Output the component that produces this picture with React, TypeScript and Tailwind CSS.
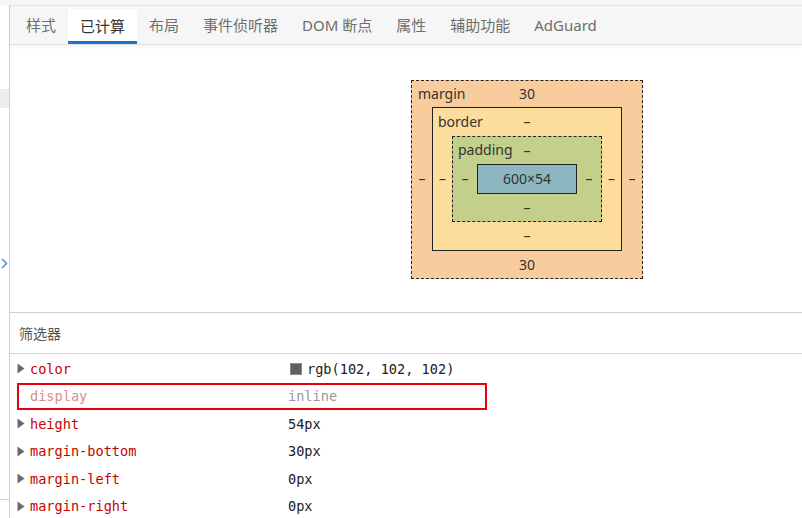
import React from "react";

const tabs = ["样式", "已计算", "布局", "事件侦听器", "DOM 断点", "属性", "辅助功能", "AdGuard"];

type Prop = { name: string; value: string; swatch?: string; inherited?: boolean };

const props: Prop[] = [
  { name: "color", value: "rgb(102, 102, 102)", swatch: "#666666" },
  { name: "display", value: "inline", inherited: true },
  { name: "height", value: "54px" },
  { name: "margin-bottom", value: "30px" },
  { name: "margin-left", value: "0px" },
  { name: "margin-right", value: "0px" },
];

const cjk = "font-['Noto_Sans','Noto_Sans_CJK_SC',sans-serif]";
const mono = "font-['DejaVu_Sans_Mono',monospace]";

function Triangle() {
  return (
    <svg width="8" height="11" viewBox="0 0 8 11" className="shrink-0">
      <path d="M0.5 0.5 L7.5 5.5 L0.5 10.5 Z" fill="#6a6a6a" />
    </svg>
  );
}

function PropRow({ p }: { p: Prop }) {
  if (p.inherited) {
    return (
      <div className="flex h-[27.5px] w-[470px] items-center border-2 border-[#e8000b] pl-[11px]">
        <span className="w-[258px] text-[#dc8c8c]">{p.name}</span>
        <span className="text-[#9a9a9a]">{p.value}</span>
      </div>
    );
  }
  return (
    <div className="flex h-[27.5px] items-center">
      <div className="w-[13px]">
        <Triangle />
      </div>
      <span className="w-[258px] text-[#c80000]">{p.name}</span>
      {p.swatch ? (
        <span className="mr-[5px] ml-[2px] h-[12px] w-[12px] border border-[#8a8a8a] bg-[#5f5f5f]" />
      ) : null}
      <span className="text-[#222]">{p.value}</span>
    </div>
  );
}

function BoxModel() {
  return (
    <div className="flex w-[232px] flex-col self-start border border-dashed border-[#222] bg-[#f9cc9d] text-[14px] leading-none text-[#333]">
      <div className="relative flex h-[26px] items-center justify-center">
        <span className="absolute left-[6px] top-[6px]">margin</span>
        <span>30</span>
      </div>
      <div className="flex items-center">
        <span className="w-[20px] text-center">–</span>
        <div className="flex w-[190px] flex-col border border-[#222] bg-[#fddd9b]">
          <div className="relative flex h-[28px] items-center justify-center">
            <span className="absolute left-[5px] top-[7px]">border</span>
            <span>–</span>
          </div>
          <div className="flex items-center">
            <span className="w-[19px] text-center">–</span>
            <div className="flex w-[150px] flex-col border border-dashed border-[#222] bg-[#c3d08b]">
              <div className="relative flex h-[27px] items-center justify-center">
                <span className="absolute left-[5px] top-[6px]">padding</span>
                <span>–</span>
              </div>
              <div className="flex items-center">
                <span className="w-[24px] text-center">–</span>
                <div className="flex h-[30px] w-[100px] items-center justify-center border border-[#222] bg-[#8cb6c0]">
                  600×54
                </div>
                <span className="w-[24px] text-center">–</span>
              </div>
              <div className="flex h-[27px] items-center justify-center">–</div>
            </div>
            <span className="w-[19px] text-center">–</span>
          </div>
          <div className="flex h-[28px] items-center justify-center">–</div>
        </div>
        <span className="w-[20px] text-center">–</span>
      </div>
      <div className="flex h-[27px] items-center justify-center">30</div>
    </div>
  );
}

export default function App() {
  return (
    <div className="flex h-[518px] w-[802px] flex-col overflow-hidden bg-white">
      <div className="h-[5px] shrink-0 bg-[#f6f6f6]" />
      <div className="flex min-h-0 flex-1">
        <div className="flex w-[10px] shrink-0 flex-col border-r border-[#cfcfcf]">
          <div className="mt-[84px] h-[19px] bg-[#ededed]" />
          <svg width="7" height="11" viewBox="0 0 7 11" className="mt-[150px] ml-[1px]">
            <path d="M1 1 L5.5 5.5 L1 10" fill="none" stroke="#4a8fd8" strokeWidth="1.5" />
          </svg>
          <div className="mt-[230px] h-px bg-[#cfcfcf]" />
        </div>
        <div className="flex min-w-0 flex-1 flex-col">
          <div
            className={`relative z-10 flex h-[40px] shrink-0 items-end border-y border-[#e4e4e4] bg-[#f6f6f6] pl-[4px] text-[15px] shadow-[0_2px_3px_rgba(0,0,0,0.05)] ${cjk}`}
          >
            {tabs.map((t, i) => (
              <div
                key={t}
                className={`flex h-[35px] items-center whitespace-nowrap px-3 ${
                  i === 1
                    ? "border-b-[3px] border-[#1a73cf] bg-white pt-[2px] text-[#333]"
                    : "pb-[2px] text-[#6e6e6e]"
                }`}
              >
                {t}
              </div>
            ))}
          </div>
          <div className="flex h-[268px] shrink-0 items-start border-b border-[#d0d0d0] pl-[401px] pt-[35px] font-['Segoe_UI','Noto_Sans',sans-serif]">
            <BoxModel />
          </div>
          <div
            className={`flex h-[41px] shrink-0 items-center border-b border-[#d6d6d6] pl-[9px] text-[14px] text-[#555] ${cjk}`}
          >
            筛选器
          </div>
          <div className={`flex flex-col pl-[7px] pt-[1px] text-[13.6px] ${mono}`}>
            {props.map((p) => (
              <PropRow key={p.name} p={p} />
            ))}
          </div>
        </div>
      </div>
    </div>
  );
}
